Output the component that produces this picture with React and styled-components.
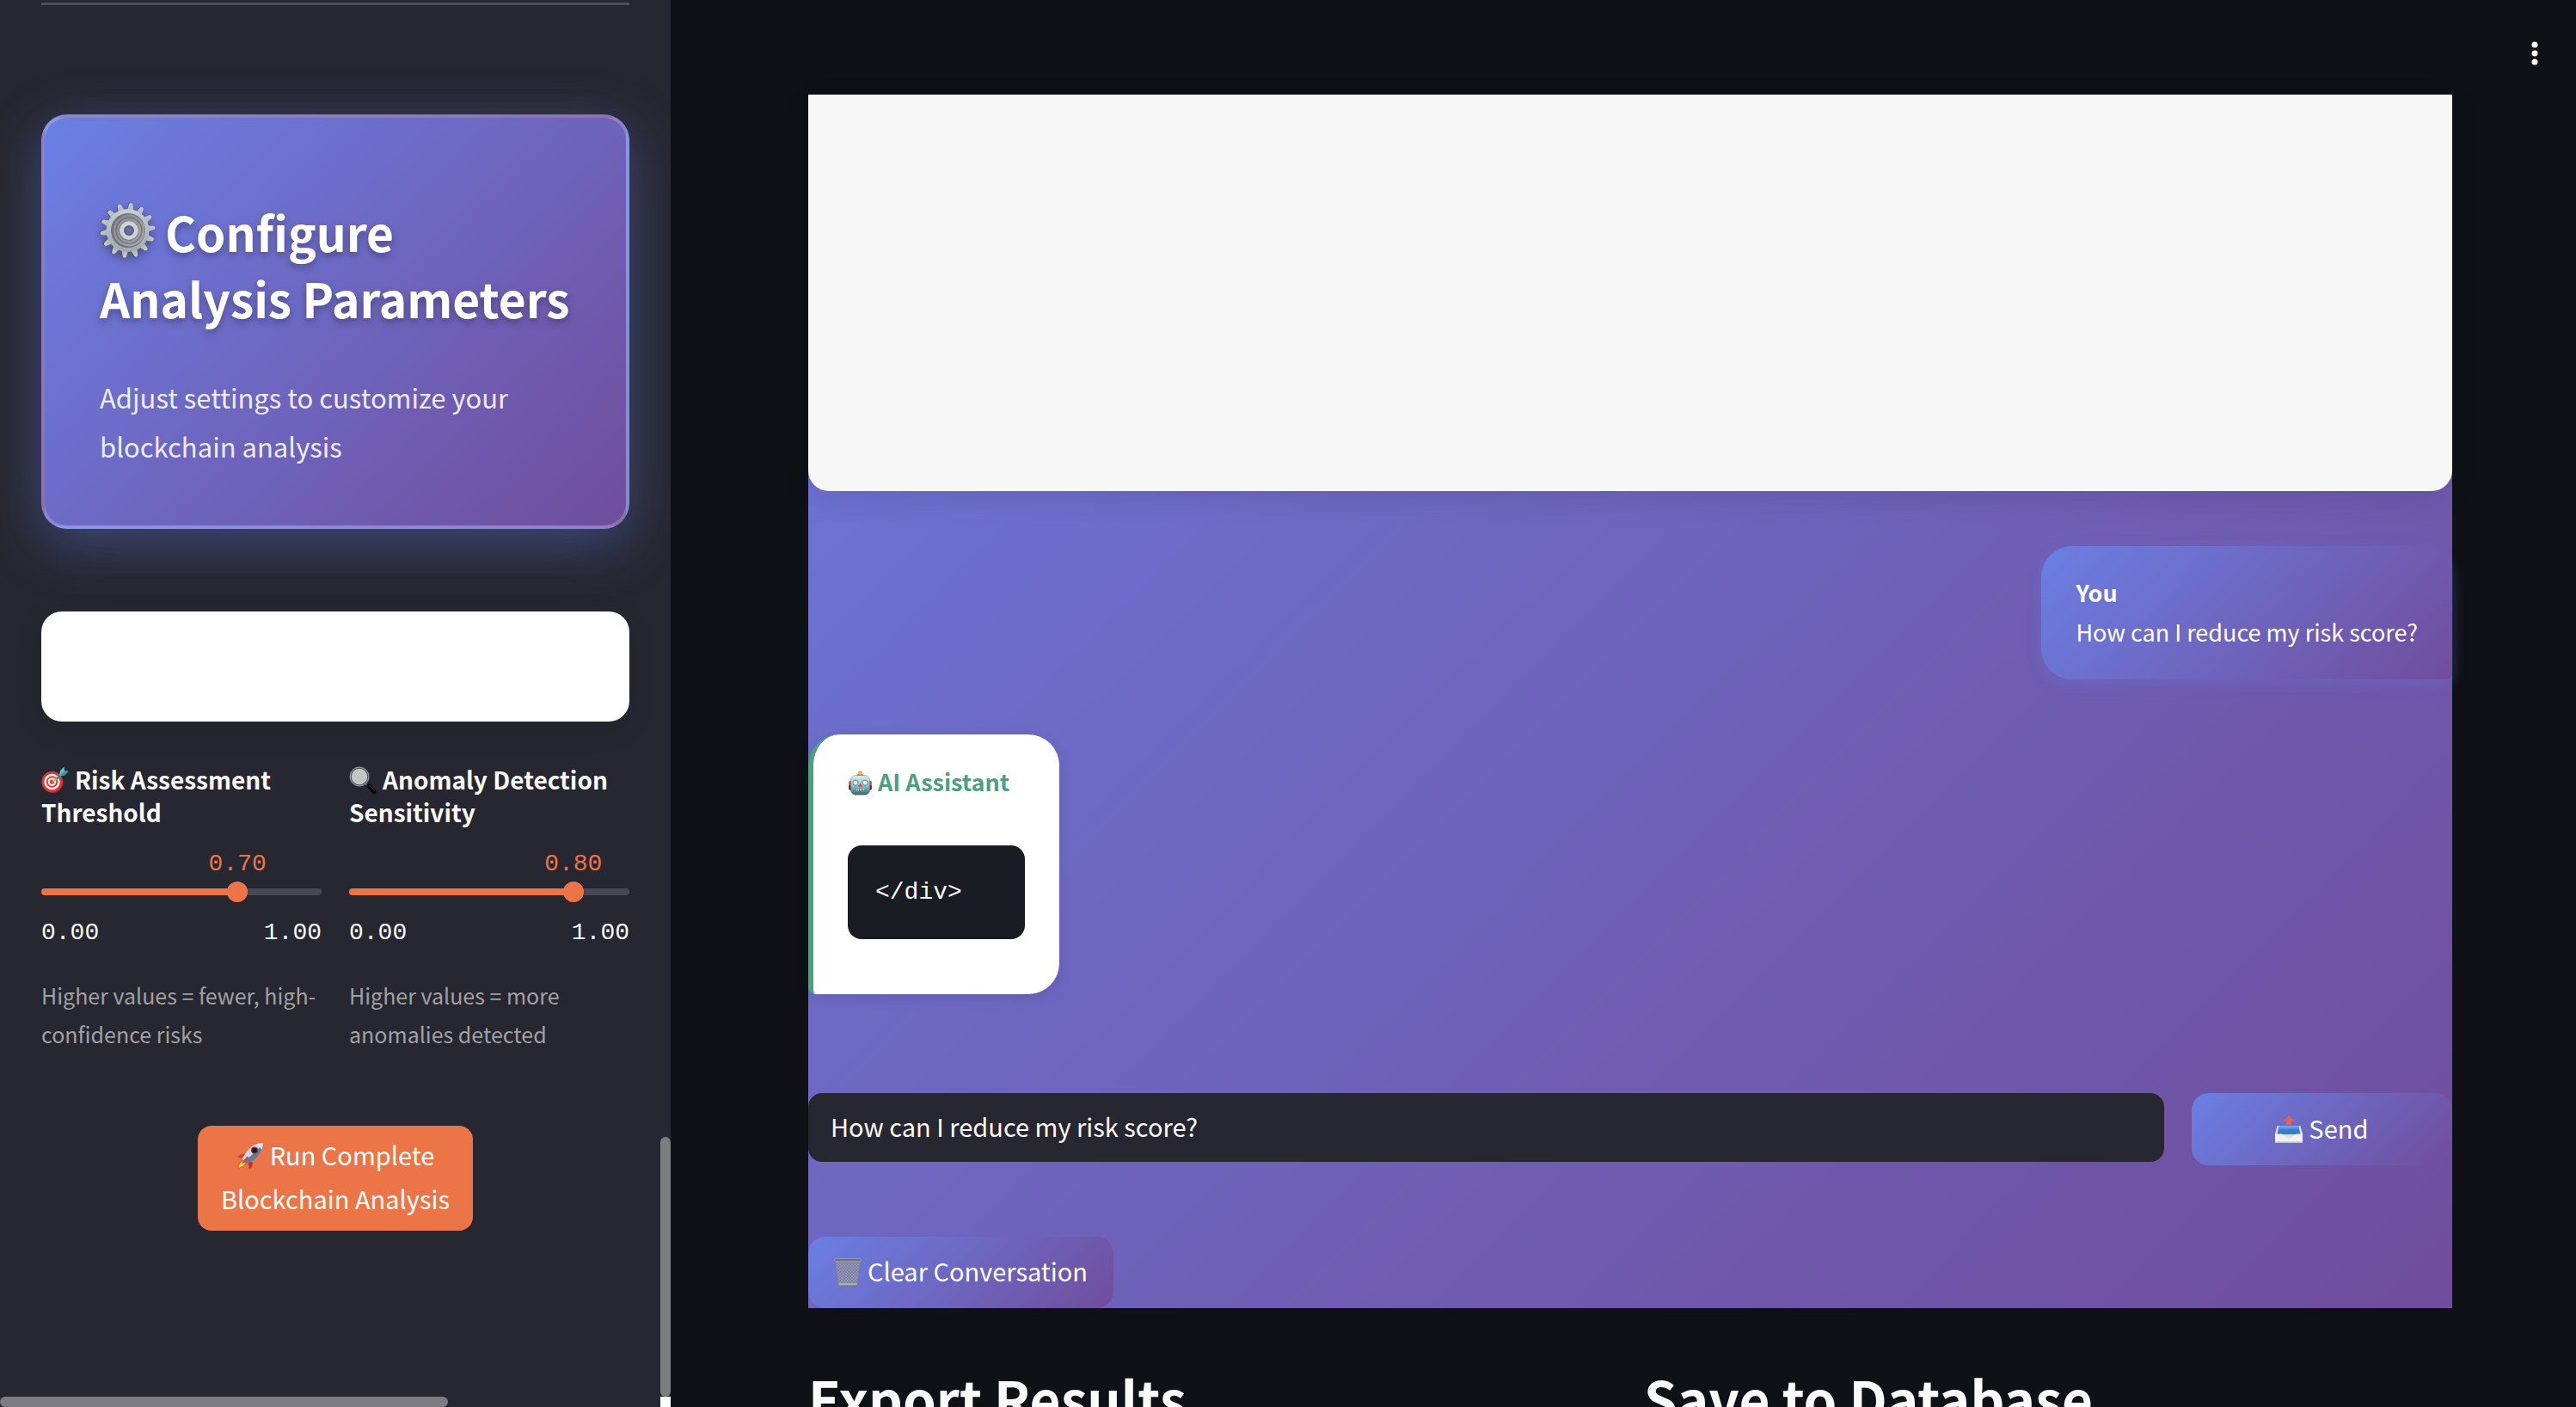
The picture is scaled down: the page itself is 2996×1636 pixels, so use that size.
import React, { useState } from "react";
import styled, { createGlobalStyle, css } from "styled-components";

const sans = `"Noto Sans CJK SC", "Noto Sans", sans-serif`;
const mono = `"Liberation Mono", monospace`;
const brand = "linear-gradient(135deg, #6b7fe3 0%, #704d9c 100%)";
const accent = "#ec7547";

const GlobalStyle = createGlobalStyle`
  *, *::before, *::after { box-sizing: border-box; }
  body { margin: 0; background: #101116; color: #fafafa; font-family: ${sans}; }
  h1, h2, h3, p, pre { margin: 0; }
  button, input { font-family: inherit; }
`;

const Shell = styled.div`
  display: flex;
  height: 100vh;
  overflow: hidden;
`;

/* ---------- sidebar ---------- */

const Sidebar = styled.aside`
  position: relative;
  flex: none;
  width: 780px;
  padding: 3px 48px 0;
  background: #262730;
  overflow: hidden;
`;

const Divider = styled.hr`
  height: 3px;
  margin: 0 0 127px;
  border: 0;
  background: #4d4e56;
`;

const HeroCard = styled.section`
  padding: 94px 0 64px 64px;
  border: 4px solid rgba(255, 255, 255, 0.2);
  border-radius: 30px;
  background: ${brand};
  box-shadow: 0 16px 64px rgba(102, 126, 234, 0.4);
`;

const HeroTitle = styled.h1`
  max-width: 570px;
  margin-bottom: 48px;
  font-size: 55px;
  line-height: 77px;
  font-weight: 700;
  color: #fff;
  text-shadow: 0 4px 8px rgba(0, 0, 0, 0.3);
`;

const HeroText = styled.p`
  max-width: 540px;
  font-size: 31px;
  line-height: 57px;
  color: rgba(255, 255, 255, 0.9);
`;

const BlankCard = styled.div`
  height: 128px;
  margin: 96px 0 48px;
  border-radius: 24px;
  background: #fff;
  box-shadow: 0 8px 32px rgba(0, 0, 0, 0.1);
`;

const Columns = styled.div`
  display: grid;
  grid-template-columns: 1fr 1fr;
  gap: 32px;
`;

const Field = styled.div`
  display: flex;
  flex-direction: column;
`;

const FieldLabel = styled.label`
  margin-bottom: 26px;
  font-size: 28px;
  line-height: 38px;
  font-weight: 700;
`;

const ValueRow = styled.div`
  position: relative;
  height: 32px;
  margin-bottom: 12px;
`;

const Value = styled.output`
  position: absolute;
  transform: translateX(-50%);
  font-family: ${mono};
  font-size: 28px;
  line-height: 32px;
  color: ${accent};
`;

const Track = styled.div`
  display: flex;
  align-items: center;
  height: 8px;
  margin-bottom: 28px;
  border-radius: 4px;
`;

const Range = styled.input`
  flex: none;
  appearance: none;
  width: calc(100% + 24px);
  height: 24px;
  margin: 0 -12px;
  background: transparent;
  cursor: pointer;

  &::-webkit-slider-thumb {
    appearance: none;
    width: 24px;
    height: 24px;
    border-radius: 50%;
    background: ${accent};
  }
`;

const Limits = styled.div`
  display: flex;
  justify-content: space-between;
  margin-bottom: 34px;
  font-family: ${mono};
  font-size: 28px;
  line-height: 32px;
`;

const Caption = styled.p`
  font-size: 25px;
  line-height: 45px;
  color: #a0a1a4;
`;

const RunButton = styled.button`
  display: block;
  width: 320px;
  margin: 84px auto 0;
  padding: 8px 16px 12px;
  border: 0;
  border-radius: 16px;
  background: ${accent};
  color: #fff;
  font-size: 29px;
  line-height: 51px;
`;

const thumb = css`
  position: absolute;
  border-radius: 6px;
  background: #7d7c80;
`;

const ScrollY = styled.div`
  ${thumb}
  right: 0;
  bottom: 12px;
  width: 12px;
  height: 302px;
`;

const ScrollX = styled.div`
  ${thumb}
  left: 0;
  bottom: 0;
  width: 521px;
  height: 12px;
`;

const ScrollCorner = styled.div`
  position: absolute;
  right: 0;
  bottom: 0;
  width: 12px;
  height: 12px;
  background: #fff;
`;

/* ---------- main column ---------- */

const Main = styled.main`
  flex: 1;
  min-width: 0;
`;

const TopBar = styled.header`
  display: flex;
  justify-content: flex-end;
  padding: 32px 28px 0 0;
  height: 110px;
  background: #0e1116;
`;

const MenuButton = styled.button`
  display: grid;
  place-items: center;
  width: 40px;
  height: 60px;
  padding: 0;
  border: 0;
  background: none;
`;

const Content = styled.div`
  padding: 0 144px 0 160px;
`;

const Chat = styled.section`
  display: flex;
  flex-direction: column;
  align-items: flex-start;
  background: ${brand} left bottom / 100% calc(100% + 580px) no-repeat;
`;

const History = styled.div`
  align-self: stretch;
  height: 461px;
  border-radius: 0 0 24px 24px;
  background: #f7f7f7;
  box-shadow: 0 8px 32px rgba(0, 0, 0, 0.1);
`;

const bubble = css`
  margin-top: 64px;
  font-size: 27px;
  line-height: 46px;
`;

const UserBubble = styled.article`
  ${bubble}
  align-self: flex-end;
  padding: 31px 40px 32px;
  border-radius: 36px 36px 8px 36px;
  background: ${brand};
  box-shadow: 0 4px 16px rgba(102, 126, 234, 0.3);
  color: #fff;
`;

const AssistantBubble = styled.article`
  ${bubble}
  padding: 32px 40px 64px;
  border-left: 6px solid #4ca081;
  border-radius: 36px 36px 36px 8px;
  background: #fff;
  box-shadow: 0 4px 16px rgba(0, 0, 0, 0.1);
`;

const Author = styled.h2`
  margin: 0;
  font-size: 27px;
  line-height: 46px;
  font-weight: 700;
  color: ${(p) => p.$color || "inherit"};
`;

const Code = styled.pre`
  margin-top: 51px;
  padding: 32px 73px 32px 32px;
  border-radius: 16px;
  background: #1a1c24;
  color: #fafafa;
  font-family: ${mono};
  font-size: 28px;
  line-height: 45px;

  code { font: inherit; }
`;

const Composer = styled.form`
  display: grid;
  grid-template-columns: 26fr 5fr;
  align-items: start;
  gap: 32px;
  align-self: stretch;
  margin: 115px 0 83px;
`;

const Prompt = styled.input`
  min-width: 0;
  height: 80px;
  padding: 0 24px 4px;
  border: 2px solid #262730;
  border-radius: 16px;
  background: #262730;
  color: #fafafa;
  font-size: 29px;
`;

const GradientButton = styled.button`
  height: ${(p) => p.$height || 84}px;
  padding: 0 30px 4px;
  border: 0;
  border-radius: 20px;
  background: ${brand};
  color: #fff;
  font-size: 29px;
  line-height: 51px;
`;

const Actions = styled.div`
  display: grid;
  grid-template-columns: 1fr 1fr;
  gap: 32px;
  margin-top: 61px;
`;

const ActionTitle = styled.h2`
  font-size: 62px;
  line-height: 86px;
  font-weight: 700;
`;

/* ---------- pictograms ---------- */

const Picto = styled.svg`
  display: inline-block;
  width: ${(p) => p.$size || 32}px;
  height: ${(p) => p.$size || 32}px;
  margin-right: ${(p) => p.$gap || 8}px;
  vertical-align: ${(p) => p.$drop || -5}px;
  overflow: visible;
`;

const TitlePicto = styled(Picto)`
  filter: drop-shadow(0 4px 4px rgba(0, 0, 0, 0.3));
`;

function Gear() {
  const teeth = Array.from({ length: 14 }, (_, i) => (i * 360) / 14 + 8);
  return (
    <TitlePicto viewBox="0 0 64 64" $size={64} $gap={12} $drop={-7} aria-hidden="true">
      <defs>
        <linearGradient id="gearRim" x1="0" y1="0" x2="0" y2="1">
          <stop offset="0" stopColor="#c6ced4" />
          <stop offset="1" stopColor="#a2a8ae" />
        </linearGradient>
        <linearGradient id="gearHub" x1="0" y1="0" x2="1" y2="1">
          <stop offset="0" stopColor="#84888c" />
          <stop offset="1" stopColor="#a9adb0" />
        </linearGradient>
      </defs>
      <g fill="#5c5a58">
        {teeth.map((a) => (
          <path key={a} d="M27 12 L29 1 Q31 -1 33 1 L36 12Z" transform={`rotate(${a} 31 32)`} />
        ))}
      </g>
      <g fill="url(#gearRim)">
        {teeth.map((a) => (
          <path key={a} d="M28 12 L30 1 Q32 -1 34 1 L37 12Z" transform={`rotate(${a} 32.5 32)`} />
        ))}
      </g>
      <circle cx="32.5" cy="32" r="25" fill="url(#gearRim)" />
      <circle cx="33" cy="32" r="20" fill="#6d7276" />
      <circle cx="34" cy="32" r="18.5" fill="url(#gearHub)" />
      <circle cx="34" cy="32" r="15" fill="none" stroke="#73777b" strokeWidth="1.5" />
      <circle cx="34" cy="32.5" r="11.5" fill="#7b7f84" />
      <circle cx="34" cy="32" r="8" fill="#6165a6" stroke="#ccd3da" strokeWidth="5.5" />
      <circle cx="34" cy="32" r="5" fill="#6c67b4" stroke="#5c6068" strokeWidth="2" />
    </TitlePicto>
  );
}

function Target() {
  return (
    <Picto viewBox="0 0 64 64" $gap={7} aria-hidden="true">
      <circle cx="26" cy="37" r="25" fill="#b5262a" />
      <circle cx="25" cy="36" r="24" fill="#d83a3a" />
      <circle cx="25" cy="36" r="16" fill="none" stroke="#f4eeee" strokeWidth="5" />
      <circle cx="25" cy="36" r="7.5" fill="none" stroke="#f4eeee" strokeWidth="4.5" />
      <path d="M25 37 L48 19" stroke="#c8b04a" strokeWidth="3.5" />
      <path d="M36 29 L47 18" stroke="#2e8797" strokeWidth="5" />
      <path d="M42 22 L44 10 L53 1 L54 10 L63 12 L54 21Z" fill="#69bcc8" />
      <path d="M42 22 L54 10 L63 12 L54 21Z" fill="#3e94a5" />
    </Picto>
  );
}

function Magnifier() {
  return (
    <Picto viewBox="0 0 64 64" $gap={7} aria-hidden="true">
      <path d="M40 41 L46 47" stroke="#9da1a6" strokeWidth="5" />
      <path d="M45 45 L59 60" stroke="#08090b" strokeWidth="10" strokeLinecap="round" />
      <path d="M48 45 L59 56" stroke="#55585d" strokeWidth="2" strokeLinecap="round" />
      <circle cx="24" cy="24" r="21" fill="#c4c5c7" stroke="#4f545a" strokeWidth="5" />
      <circle cx="24" cy="24" r="21.5" fill="none" stroke="#98a2ac" strokeWidth="2" />
    </Picto>
  );
}

function Rocket() {
  return (
    <Picto viewBox="0 0 64 64" $gap={7} aria-hidden="true">
      <path d="M19 28 Q9 26 2 36 L16 38Z" fill="#dc4229" />
      <path d="M37 45 Q40 56 30 63 L27 48Z" fill="#c8311f" />
      <path d="M16 38 Q5 42 2 62 Q19 59 25 48Z" fill="#e8652a" />
      <path d="M15 44 Q7 48 5 60 Q15 57 21 49Z" fill="#f9dc4c" />
      <path d="M62 2 Q40 2 25 20 L13 39 L25 51 L42 40 Q60 24 62 2Z" fill="#5d7da6" />
      <path d="M62 2 Q40 2 25 20 L13 39 L18 44 Q45 25 62 2Z" fill="#ccd9e6" />
      <path d="M62 2 Q52 2 45 5 Q54 9 59 18 Q62 10 62 2Z" fill="#dfe6ed" />
      <circle cx="42" cy="19" r="8" fill="#8d2b2c" />
      <circle cx="42" cy="19" r="5.5" fill="#191a22" />
      <path d="M25 33 L11 50 L18 48 L29 37Z" fill="#d9412b" />
    </Picto>
  );
}

function Robot() {
  return (
    <Picto viewBox="0 0 64 68" $size={29} $gap={6} aria-hidden="true">
      <defs>
        <linearGradient id="robotFace" x1="0" y1="0" x2="0" y2="1">
          <stop offset="0" stopColor="#e2efed" />
          <stop offset="0.5" stopColor="#9fc5c7" />
          <stop offset="1" stopColor="#2f6676" />
        </linearGradient>
      </defs>
      <rect x="1" y="28" width="8" height="24" rx="3" fill="#c93c3c" />
      <rect x="55" y="28" width="8" height="24" rx="3" fill="#c93c3c" />
      <rect x="1" y="40" width="8" height="13" rx="3" fill="#5a2730" />
      <rect x="55" y="40" width="8" height="13" rx="3" fill="#5a2730" />
      <ellipse cx="32" cy="13" rx="8" ry="4" fill="#4d3d80" />
      <circle cx="32" cy="6" r="6" fill="#f3b552" />
      <rect x="6" y="13" width="52" height="53" rx="13" fill="url(#robotFace)" stroke="#3f7482" strokeWidth="1" />
      <circle cx="19" cy="33" r="7" fill="#fff" stroke="#51a9c4" strokeWidth="3" />
      <circle cx="45" cy="33" r="7" fill="#fff" stroke="#51a9c4" strokeWidth="3" />
      <path d="M32 34 L38 44 L26 44Z" fill="#d9483f" />
      <rect x="19" y="49" width="26" height="7" rx="2" fill="#36525c" />
      <path d="M22 50v5M27 50v5M32 50v5M37 50v5M42 50v5" stroke="#fff" strokeWidth="3" />
    </Picto>
  );
}

function Outbox() {
  return (
    <Picto viewBox="0 0 64 64" $gap={7} aria-hidden="true">
      <path d="M5 24 H59 L64 43 V63 H0 V43Z" fill="#dfe1e4" />
      <path d="M9 25 H55 L59 44 H5Z" fill="#3f7cc4" />
      <path d="M9 25 H55 L56 31 H8Z" fill="#5c9fe8" />
      <path d="M32 0 L45 13 H38 V22 H26 V13 H19Z" fill="#e9614b" />
      <path d="M0 43 H14 Q19 43 22 48 Q26 54 32 54 Q38 54 42 48 Q45 43 50 43 H64 V63 H0Z" fill="#f1f1f2" />
      <path d="M0 62 H64" stroke="#b6b8bc" strokeWidth="2" />
    </Picto>
  );
}

function Wastebasket() {
  return (
    <Picto viewBox="0 0 64 64" $gap={7} aria-hidden="true">
      <defs>
        <pattern id="mesh" width="7" height="7" patternUnits="userSpaceOnUse">
          <path d="M0 0 L7 7 M7 0 L0 7" stroke="#a9adb5" strokeWidth="1.3" />
        </pattern>
      </defs>
      <path d="M3 5 H61 L54 62 H10Z" fill="#7377a6" />
      <path d="M3 5 H61 L54 62 H10Z" fill="url(#mesh)" />
      <path d="M4 8 L11 61 M60 8 L53 61" stroke="#85888f" strokeWidth="2" />
      <rect x="1" y="1" width="62" height="6" rx="3" fill="#6f7174" stroke="#a4a6aa" strokeWidth="1.5" />
      <rect x="10" y="57" width="44" height="6" rx="3" fill="#aeb0b3" stroke="#77797d" strokeWidth="1" />
    </Picto>
  );
}

/* ---------- page ---------- */

function SliderField({ id, icon, label, initial, caption }) {
  const [value, setValue] = useState(initial);
  const pct = `${value * 100}%`;
  return (
    <Field>
      <FieldLabel htmlFor={id}>
        {icon}
        {label}
      </FieldLabel>
      <ValueRow>
        <Value htmlFor={id} style={{ left: pct }}>{value.toFixed(2)}</Value>
      </ValueRow>
      <Track style={{ background: `linear-gradient(to right, ${accent} ${pct}, #484954 ${pct})` }}>
        <Range
          id={id}
          type="range"
          min="0"
          max="1"
          step="0.01"
          value={value}
          onChange={(e) => setValue(Number(e.target.value))}
        />
      </Track>
      <Limits>
        <span>0.00</span>
        <span>1.00</span>
      </Limits>
      <Caption>{caption}</Caption>
    </Field>
  );
}

export default function App() {
  const [prompt, setPrompt] = useState("How can I reduce my risk score?");
  return (
    <Shell>
      <GlobalStyle />
      <Sidebar>
        <Divider />
        <HeroCard>
          <HeroTitle>
            <Gear />
            Configure Analysis Parameters
          </HeroTitle>
          <HeroText>Adjust settings to customize your blockchain analysis</HeroText>
        </HeroCard>
        <BlankCard />
        <Columns>
          <SliderField
            id="risk"
            icon={<Target />}
            label="Risk Assessment Threshold"
            initial={0.7}
            caption="Higher values = fewer, high-confidence risks"
          />
          <SliderField
            id="anomaly"
            icon={<Magnifier />}
            label="Anomaly Detection Sensitivity"
            initial={0.8}
            caption="Higher values = more anomalies detected"
          />
        </Columns>
        <RunButton type="button">
          <Rocket />
          Run Complete Blockchain Analysis
        </RunButton>
        <ScrollY />
        <ScrollX />
        <ScrollCorner />
      </Sidebar>

      <Main>
        <TopBar>
          <MenuButton type="button" aria-label="Main menu">
            <svg width="8" height="28" viewBox="0 0 8 28" fill="#fff" aria-hidden="true">
              <circle cx="4" cy="4" r="3.5" />
              <circle cx="4" cy="14" r="3.5" />
              <circle cx="4" cy="24" r="3.5" />
            </svg>
          </MenuButton>
        </TopBar>
        <Content>
          <Chat>
            <History />
            <UserBubble>
              <Author>You</Author>
              <p>How can I reduce my risk score?</p>
            </UserBubble>
            <AssistantBubble>
              <Author $color="#4ca081">
                <Robot />
                AI Assistant
              </Author>
              <Code>
                <code>{"</div>"}</code>
              </Code>
            </AssistantBubble>
            <Composer onSubmit={(e) => e.preventDefault()}>
              <Prompt
                type="text"
                aria-label="Message"
                value={prompt}
                onChange={(e) => setPrompt(e.target.value)}
              />
              <GradientButton type="submit">
                <Outbox />
                Send
              </GradientButton>
            </Composer>
            <GradientButton type="button" $height={83}>
              <Wastebasket />
              Clear Conversation
            </GradientButton>
          </Chat>
          <Actions>
            <ActionTitle>Export Results</ActionTitle>
            <ActionTitle>Save to Database</ActionTitle>
          </Actions>
        </Content>
      </Main>
    </Shell>
  );
}
